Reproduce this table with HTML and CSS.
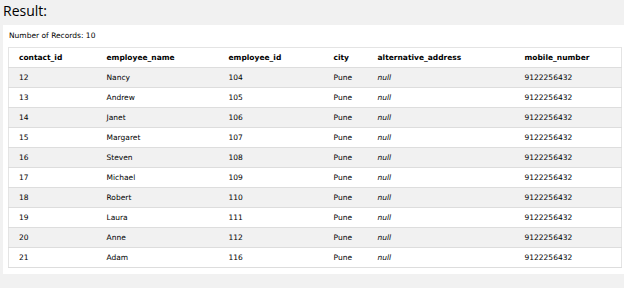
FILE: index.html
```html
<!DOCTYPE html>
<html lang="en">
<head>
    <meta charset="UTF-8">
    <title>Result</title>
    <link rel="stylesheet" href="styles.css">
</head>
<body>
    <h2 class="result-title">Result:</h2>
    <div class="result-panel">
        <div class="record-count">Number of Records: 10</div>
        <table class="result-table">
            <colgroup>
                <col class="c1"><col class="c2"><col class="c3"><col class="c4"><col class="c5"><col class="c6">
            </colgroup>
            <tr>
                <th>contact_id</th>
                <th>employee_name</th>
                <th>employee_id</th>
                <th>city</th>
                <th>alternative_address</th>
                <th>mobile_number</th>
            </tr>
            <tr><td>12</td><td>Nancy</td><td>104</td><td>Pune</td><td><i>null</i></td><td>9122256432</td></tr>
            <tr><td>13</td><td>Andrew</td><td>105</td><td>Pune</td><td><i>null</i></td><td>9122256432</td></tr>
            <tr><td>14</td><td>Janet</td><td>106</td><td>Pune</td><td><i>null</i></td><td>9122256432</td></tr>
            <tr><td>15</td><td>Margaret</td><td>107</td><td>Pune</td><td><i>null</i></td><td>9122256432</td></tr>
            <tr><td>16</td><td>Steven</td><td>108</td><td>Pune</td><td><i>null</i></td><td>9122256432</td></tr>
            <tr><td>17</td><td>Michael</td><td>109</td><td>Pune</td><td><i>null</i></td><td>9122256432</td></tr>
            <tr><td>18</td><td>Robert</td><td>110</td><td>Pune</td><td><i>null</i></td><td>9122256432</td></tr>
            <tr><td>19</td><td>Laura</td><td>111</td><td>Pune</td><td><i>null</i></td><td>9122256432</td></tr>
            <tr><td>20</td><td>Anne</td><td>112</td><td>Pune</td><td><i>null</i></td><td>9122256432</td></tr>
            <tr><td>21</td><td>Adam</td><td>116</td><td>Pune</td><td><i>null</i></td><td>9122256432</td></tr>
        </table>
    </div>
</body>
</html>
```

FILE: styles.css
```css
body {
    margin: 0;
    padding: 0 0 0 3px;
    background-color: #f1f1f1;
    font-family: "DejaVu Sans", Verdana, sans-serif;
    color: #000;
}
.result-title {
    margin: 0;
    height: 25px;
    font-family: "Open Sans", "Liberation Sans", sans-serif;
    font-weight: normal;
    font-size: 14px;
    line-height: 21px;
}
.result-panel {
    background: white;
    padding: 5px 3px 6px 5px;
}
.record-count {
    font-size: 7.5px;
    height: 17px;
    line-height: 12px;
    padding-left: 1px;
}
.result-table {
    border-collapse: collapse;
    table-layout: fixed;
    width: 613px;
    border: 1px solid #e4e4e4;
    font-size: 7.5px;
}
.c1 { width: 88px; }
.c2 { width: 122px; }
.c3 { width: 105px; }
.c4 { width: 44px; }
.c5 { width: 147px; }
.c6 { width: 107px; }
th, td {
    text-align: left;
    height: 19px;
    padding: 0 0 0 10px;
    border-bottom: 1px solid #ddd;
    white-space: nowrap;
}
th {
    font-weight: bold;
}
.result-table tr:nth-child(even) {
    background: #f1f1f1;
}
```
